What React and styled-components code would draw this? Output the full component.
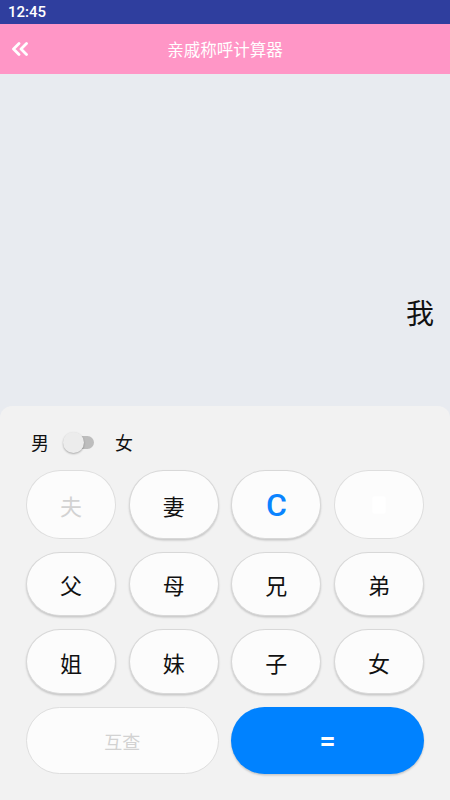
import styled, { createGlobalStyle } from "styled-components";

const GlobalStyle = createGlobalStyle`
  * { box-sizing: border-box; }
  html, body { margin: 0; padding: 0; height: 800px; overflow: hidden; }
  body {
    font-family: Roboto, "Noto Sans CJK SC", "Noto Sans", sans-serif;
    background: #f2f2f2;
  }
`;

const keys = [
  { label: "夫", disabled: true },
  { label: "妻" },
  { label: "C", kind: "clear" },
  { label: "", kind: "delete", disabled: true },
  { label: "父" },
  { label: "母" },
  { label: "兄" },
  { label: "弟" },
  { label: "姐" },
  { label: "妹" },
  { label: "子" },
  { label: "女" },
];

function BackIcon() {
  return (
    <svg width="18" height="14" viewBox="0 0 18 14">
      <polyline points="8,1.5 2.5,7 8,12.5" fill="none" stroke="#fff" strokeWidth="2.8" strokeLinecap="round" strokeLinejoin="round" />
      <polyline points="15.5,1.5 10,7 15.5,12.5" fill="none" stroke="#fff" strokeWidth="2.8" strokeLinecap="round" strokeLinejoin="round" />
    </svg>
  );
}

function DeleteIcon() {
  return (
    <svg width="14" height="18" viewBox="0 0 14 18">
      <rect x="0.5" y="0.5" width="13" height="17" rx="1.5" fill="#ffffff" />
    </svg>
  );
}

export default function App() {
  return (
    <Page>
      <GlobalStyle />
      <StatusBar>12:45</StatusBar>
      <Header>
        <BackButton>
          <BackIcon />
        </BackButton>
        <Title>亲戚称呼计算器</Title>
      </Header>
      <Display>
        <Result>我</Result>
      </Display>
      <Panel>
        <GenderRow>
          <GenderLabel>男</GenderLabel>
          <Switch>
            <Knob />
          </Switch>
          <GenderLabel>女</GenderLabel>
        </GenderRow>
        <KeyGrid>
          {keys.map((k, i) => (
            <Key key={i} $disabled={k.disabled} $kind={k.kind}>
              {k.kind === "delete" ? <DeleteIcon /> : k.label}
            </Key>
          ))}
          <WideKey $disabled>互查</WideKey>
          <EqualKey>=</EqualKey>
        </KeyGrid>
      </Panel>
    </Page>
  );
}

const Page = styled.div`
  display: flex;
  flex-direction: column;
  width: 450px;
  height: 800px;
  background: #e8ebf0;
`;

const StatusBar = styled.div`
  height: 24px;
  background: #2f3e9e;
  color: #fff;
  font-family: Roboto, sans-serif;
  font-weight: 500;
  font-size: 15px;
  line-height: 24px;
  padding-left: 8px;
`;

const Header = styled.div`
  position: relative;
  height: 50px;
  background: #ff96c6;
  display: flex;
  align-items: center;
  justify-content: center;
`;

const BackButton = styled.div`
  position: absolute;
  left: 11px;
  top: 18px;
  display: flex;
`;

const Title = styled.div`
  color: #fff;
  font-size: 16.5px;
  font-family: "Noto Sans CJK SC", sans-serif;
`;

const Display = styled.div`
  flex: 1;
  display: flex;
  flex-direction: column;
  justify-content: flex-end;
  align-items: flex-end;
  padding: 0 16px 74px 0;
`;

const Result = styled.div`
  font-size: 28px;
  color: #111;
  font-family: "Noto Sans CJK SC", sans-serif;
  line-height: 40px;
`;

const Panel = styled.div`
  background: #f2f2f2;
  border-radius: 12px 12px 0 0;
  padding: 22px 26px 26px;
`;

const GenderRow = styled.div`
  height: 28px;
  display: flex;
  align-items: center;
  margin-bottom: 14px;
`;

const GenderLabel = styled.span`
  font-size: 18px;
  color: #111;
  padding-left: 5px;
  font-family: "Noto Sans CJK SC", sans-serif;
`;

const Switch = styled.div`
  position: relative;
  width: 25px;
  height: 13px;
  border-radius: 7px;
  background: #bdbdbd;
  margin: 0 16px 0 20px;
`;

const Knob = styled.div`
  position: absolute;
  left: -6px;
  top: -4px;
  width: 21px;
  height: 21px;
  border-radius: 50%;
  background: #ececec;
  box-shadow: 0 1px 2px rgba(0, 0, 0, 0.3);
`;

const KeyGrid = styled.div`
  display: grid;
  grid-template-columns: repeat(4, 1fr);
  grid-template-rows: 69px 64px 65px 67px;
  column-gap: 12.6px;
  row-gap: 13px;
`;

const Key = styled.div`
  display: flex;
  align-items: center;
  justify-content: center;
  border-radius: 38% / 50%;
  background: #fcfcfc;
  border: 1px solid ${(p) => (p.$disabled ? "#dedede" : "#d8d8d8")};
  box-shadow: ${(p) => (p.$disabled ? "none" : "0 1.5px 2px rgba(0, 0, 0, 0.18)")};
  font-family: ${(p) => (p.$kind === "clear" ? "Roboto, sans-serif" : "\"Noto Sans CJK SC\", sans-serif")};
  font-size: ${(p) => (p.$kind === "clear" ? "32px" : "22px")};
  font-weight: ${(p) => (p.$kind === "clear" ? 500 : 400)};
  color: ${(p) => (p.$kind === "clear" ? "#0a84ff" : p.$disabled ? "#d2d2d2" : "#111")};
`;

const WideKey = styled.div`
  grid-column: span 2;
  display: flex;
  align-items: center;
  justify-content: center;
  border-radius: 34px;
  background: #fcfcfc;
  border: 1px solid #dedede;
  font-family: "Noto Sans CJK SC", sans-serif;
  font-size: 18px;
  color: #d2d2d2;
`;

const EqualKey = styled.div`
  grid-column: span 2;
  display: flex;
  align-items: center;
  justify-content: center;
  border-radius: 34px;
  background: #0082ff;
  box-shadow: 0 1.5px 2px rgba(0, 0, 0, 0.18);
  font-family: Roboto, sans-serif;
  font-size: 28px;
  font-weight: 700;
  color: #fff;
`;
